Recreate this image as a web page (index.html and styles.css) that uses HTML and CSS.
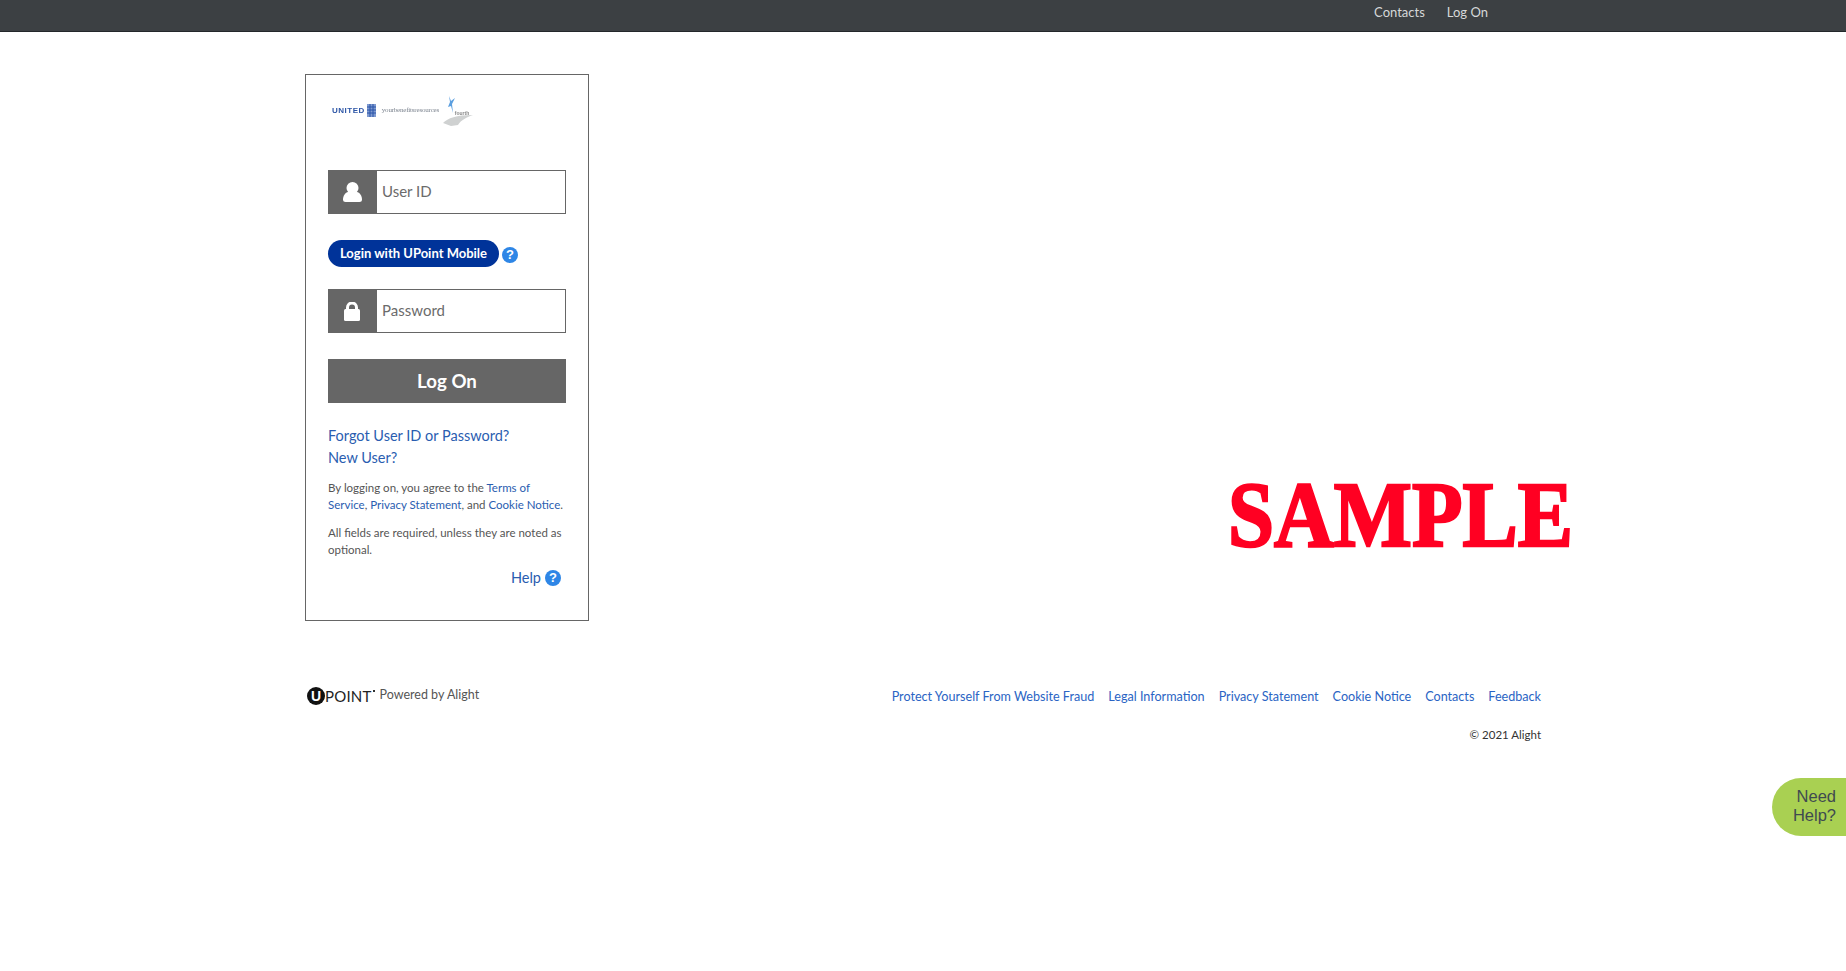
FILE: index.html
```html
<!DOCTYPE html>
<html lang="en">
<head>
    <meta charset="UTF-8">
    <title>Log On</title>
    <link rel="stylesheet" href="styles.css">
</head>
<body>
    <nav class="top-bar">
        <div class="top-links">
            <a href="#">Contacts</a>
            <a href="#">Log On</a>
        </div>
    </nav>
    <main class="page">
        <div class="content-row">
            <section class="login-box">
                <div class="logos">
                    <span class="logo-united">UNITED</span>
                    <svg class="logo-globe" width="9" height="13" viewBox="0 0 9 13"><rect width="9" height="13" fill="#7f9ad0"/><path d="M0 3h9M0 6h9M0 9h9M3 0v13M6 0v13" stroke="#2b55a8" stroke-width="1"/></svg>
                    <span class="logo-benefits">yourbenefitsresources</span>
                    <span class="logo-fourth">
                        <svg width="32" height="32" viewBox="0 0 32 32">
                            <path d="M7 1l2 5 4-3-3 6 1 9-2-7-3 1 2-5z" fill="#5b9fe0"/>
                            <path d="M1 28c5-5 13-8 30-8-6 2-12 5-15 10l-7 1z" fill="#cfd1d1"/>
                        </svg>
                        <span class="fourth-text">fourth</span>
                    </span>
                </div>
                <div class="field">
                    <span class="field-icon">
                        <svg width="19" height="20" viewBox="0 0 19 20"><ellipse cx="9.5" cy="6" rx="6" ry="6" fill="#fff"/><path d="M2.5 20C1 20 0 19.2 0 17.5 0 13.5 2.5 10.5 5 10h9c2.5.5 5 3.5 5 7.5 0 1.7-1 2.5-2.5 2.5z" fill="#fff"/></svg>
                    </span>
                    <input class="field-input" type="text" placeholder="User ID">
                </div>
                <div class="mobile-row">
                    <button class="mobile-btn" type="button">Login with UPoint Mobile</button>
                    <span class="help-dot">?</span>
                </div>
                <div class="field">
                    <span class="field-icon">
                        <svg width="16" height="19" viewBox="0 0 16 19"><path d="M3.5 9V5.5a4.5 4.5 0 0 1 9 0V9" fill="none" stroke="#fff" stroke-width="3"/><rect y="7" width="16" height="12" rx="1.5" fill="#fff"/></svg>
                    </span>
                    <input class="field-input" type="password" placeholder="Password">
                </div>
                <button class="logon-btn" type="button">Log On</button>
                <div class="login-links">
                    <a href="#">Forgot User ID or Password?</a>
                    <a href="#">New User?</a>
                </div>
                <p class="note">By logging on, you agree to the <a href="#">Terms of Service</a>, <a href="#">Privacy Statement</a>, and <a href="#">Cookie Notice</a>.</p>
                <p class="note">All fields are required, unless they are noted as optional.</p>
                <div class="help-row">
                    <a href="#">Help</a>
                    <span class="help-dot">?</span>
                </div>
            </section>
            <div class="sample">SAMPLE</div>
        </div>
        <footer class="footer">
            <div class="brand">
                <span class="upoint-mark">U</span><span class="upoint-name">POINT</span><span class="powered">Powered by Alight</span>
            </div>
            <div class="footer-right">
                <div class="footer-links">
                    <a href="#">Protect Yourself From Website Fraud</a>
                    <a href="#">Legal Information</a>
                    <a href="#">Privacy Statement</a>
                    <a href="#">Cookie Notice</a>
                    <a href="#">Contacts</a>
                    <a href="#">Feedback</a>
                </div>
                <p class="copyright">© 2021 Alight</p>
            </div>
        </footer>
    </main>
    <div class="need-help">Need<br>Help?</div>
</body>
</html>
```

FILE: styles.css
```css
:root {
    --gray: #666666;
    --link: #2a5db0;
    --font-main: 'Lato', 'Open Sans', sans-serif;
}
html, body { height: 100%; }
body { margin: 0; background: #fff; color: #555; font-family: var(--font-main); overflow: hidden; }
a { color: var(--link); text-decoration: none; }

.top-bar { height: 31px; background: #3c4043; border-bottom: 1px solid #23272a; display: flex; justify-content: flex-end; align-items: center; padding-right: 358px; }
.top-links { display: flex; gap: 22px; font-size: 13px; padding-bottom: 7px; }
.top-links a { color: #d6d8d9; }

.page { margin-left: 305px; width: 1236px; }
.content-row { display: flex; padding-top: 42px; }
.login-box { box-sizing: border-box; width: 284px; height: 547px; border: 1px solid #666; padding: 0 22px; flex-shrink: 0; }

.logos { display: flex; align-items: center; height: 32px; margin-top: 19px; margin-bottom: 44px; padding-left: 4px; filter: blur(0.5px); }
.logo-united { font: 700 8px 'Liberation Sans', sans-serif; color: #2c55a6; letter-spacing: 0.5px; margin-right: 2px; }
.logo-globe { margin-right: 6px; }
.logo-benefits { font: 7px 'Liberation Serif', serif; color: #7d8590; letter-spacing: -0.2px; white-space: nowrap; width: 60px; }
.logo-fourth { display: flex; align-items: flex-end; margin-top: 2px; }
.fourth-text { font: 700 5px 'Liberation Sans', sans-serif; color: #888; margin-left: -19px; padding-bottom: 11px; }

.field { display: flex; box-sizing: border-box; height: 44px; border: 1px solid #666; }
.field-icon { box-sizing: border-box; width: 48px; padding-right: 2px; background: var(--gray); display: flex; align-items: center; justify-content: center; flex-shrink: 0; }
.field-input { flex: 1; min-width: 0; border: none; outline: none; padding: 0 5px 2px; font: 15px var(--font-main); color: #555; }
.field-input::placeholder { color: #6b6b6b; opacity: 1; }

.mobile-row { display: flex; align-items: center; gap: 3px; margin: 26px 0 22px; height: 27px; }
.mobile-btn { height: 27px; width: 171px; padding: 0 0 2px; border: none; border-radius: 14px; background: #003399; color: #fff; font: 700 13px var(--font-main); }
.help-dot { width: 16px; height: 16px; border-radius: 50%; background: #2e86e6; color: #fff; font: 700 13px/16px 'Liberation Sans', sans-serif; text-align: center; display: inline-block; }
.mobile-row .help-dot { margin-top: 2px; }

.logon-btn { display: block; width: 100%; height: 44px; margin-top: 26px; border: none; background: var(--gray); color: #fff; font: 700 18.7px var(--font-main); }

.login-links { margin-top: 22px; display: flex; flex-direction: column; align-items: flex-start; font-size: 14.5px; line-height: 22px; }
.note { margin: 11px 0 0; font-size: 11.5px; line-height: 17px; color: #555; }
.login-links + .note { margin-top: 10px; }
.help-row { display: flex; justify-content: flex-end; align-items: center; gap: 4px; margin-top: 11px; padding-right: 5px; font-size: 14.5px; }

.sample { margin: 394px 0 0 639px; font-family: 'Liberation Serif', serif; font-weight: 700; font-size: 93px; line-height: 1; -webkit-text-stroke: 2.5px #ff0022; color: #ff0022; white-space: nowrap; transform: scaleX(0.89); transform-origin: left center; }

.footer { display: flex; justify-content: space-between; margin-top: 62px; }
.brand { display: flex; align-items: center; height: 26px; font-size: 12.5px; }
.upoint-mark { width: 18px; height: 18px; margin-left: 2px; border-radius: 50%; background: #111; color: #fff; font: 700 14px/18px 'Liberation Sans', sans-serif; text-align: center; }
.upoint-name { font: 15px 'Lato', sans-serif; color: #222; letter-spacing: 0.2px; margin-right: 5px; }
.upoint-name::after { content: ''; display: inline-block; width: 2px; height: 2px; background: #333; vertical-align: 10px; margin-left: 1px; }
.powered { color: #555; padding-bottom: 4px; }
.footer-links { display: flex; gap: 14px; font-size: 12.6px; padding-top: 6px; }
.footer-links a { color: #2a64c4; }
.copyright { margin: 24px 0 0; text-align: right; font-size: 11.5px; color: #333; }

.need-help { position: fixed; right: 0; top: 778px; width: 74px; height: 58px; box-sizing: border-box; padding-top: 9px; padding-right: 10px; border-radius: 29px 0 0 29px; background: #a9d052; color: #3f4a50; font: 16.5px/19px 'Liberation Sans', sans-serif; text-align: right; }
```
